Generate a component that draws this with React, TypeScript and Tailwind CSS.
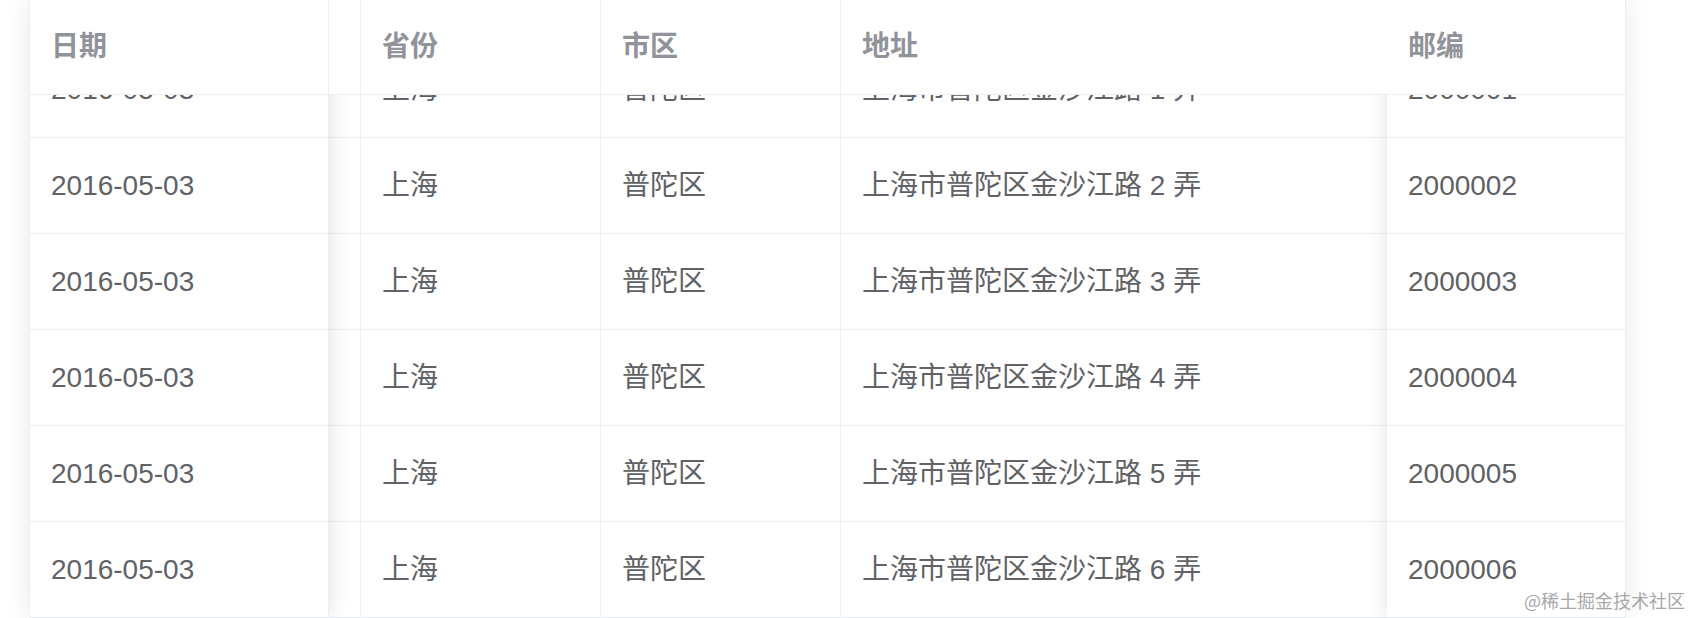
const rows = [1, 2, 3, 4, 5, 6].map((n) => ({
  date: '2016-05-03',
  province: '上海',
  city: '普陀区',
  address: `上海市普陀区金沙江路 ${n} 弄`,
  zip: `200000${n}`,
}));

const font = { fontFamily: '"Liberation Sans", "Noto Sans CJK SC", sans-serif' };

export default function App() {
  return (
    <div className="relative w-full h-[618px] bg-white overflow-hidden" style={font}>
      <div className="ml-[29px] w-[1597px] h-full flex flex-col border-x border-[#ebeef5] bg-white shadow-[0_0_24px_rgba(0,0,0,0.09)]">
        {/* header */}
        <div className="relative z-20 flex h-[95px] shrink-0 bg-white border-b border-[#ebeef5] text-[28px] font-bold text-[#909399]">
          <div className="w-[299px] flex items-center pl-[21px] border-r border-[#ebeef5]">日期</div>
          <div className="w-[32px] border-r border-[#ebeef5]" />
          <div className="w-[240px] flex items-center pl-[21px] border-r border-[#ebeef5]">省份</div>
          <div className="w-[240px] flex items-center pl-[21px] border-r border-[#ebeef5]">市区</div>
          <div className="w-[546px] flex items-center pl-[21px]">地址</div>
          <div className="w-[238px] flex items-center pl-[21px]">邮编</div>
        </div>

        {/* body */}
        <div className="flex flex-1 min-h-0 overflow-hidden text-[28px] text-[#606266]">
          <div className="relative z-10 w-[299px] -mt-[53px] bg-white shadow-[0_0_20px_rgba(0,0,0,0.12)]">
            {rows.map((r, i) => (
              <div key={i} className="h-[96px] flex items-center pl-[21px] border-b border-r border-[#ebeef5]">
                {r.date}
              </div>
            ))}
          </div>

          <div className="flex-1 -mt-[53px]">
            {rows.map((r, i) => (
              <div key={i} className="flex h-[96px] border-b border-[#ebeef5]">
                <div className="w-[32px] border-r border-[#ebeef5]" />
                <div className="w-[240px] flex items-center pl-[21px] border-r border-[#ebeef5]">{r.province}</div>
                <div className="w-[240px] flex items-center pl-[21px] border-r border-[#ebeef5]">{r.city}</div>
                <div className="flex-1 flex items-center pl-[21px]">{r.address}</div>
              </div>
            ))}
          </div>

          <div className="relative z-10 w-[238px] -mt-[53px] bg-white shadow-[0_0_20px_rgba(0,0,0,0.12)]">
            {rows.map((r, i) => (
              <div key={i} className="h-[96px] flex items-center pl-[21px] border-b border-[#ebeef5]">
                {r.zip}
              </div>
            ))}
          </div>
        </div>
      </div>

      <div className="absolute right-[7px] bottom-[9px] z-30 text-[18px] leading-none text-[#a8a8a8]" style={{ fontFamily: '"Noto Sans CJK SC", sans-serif' }}>
        @稀土掘金技术社区
      </div>
    </div>
  );
}
